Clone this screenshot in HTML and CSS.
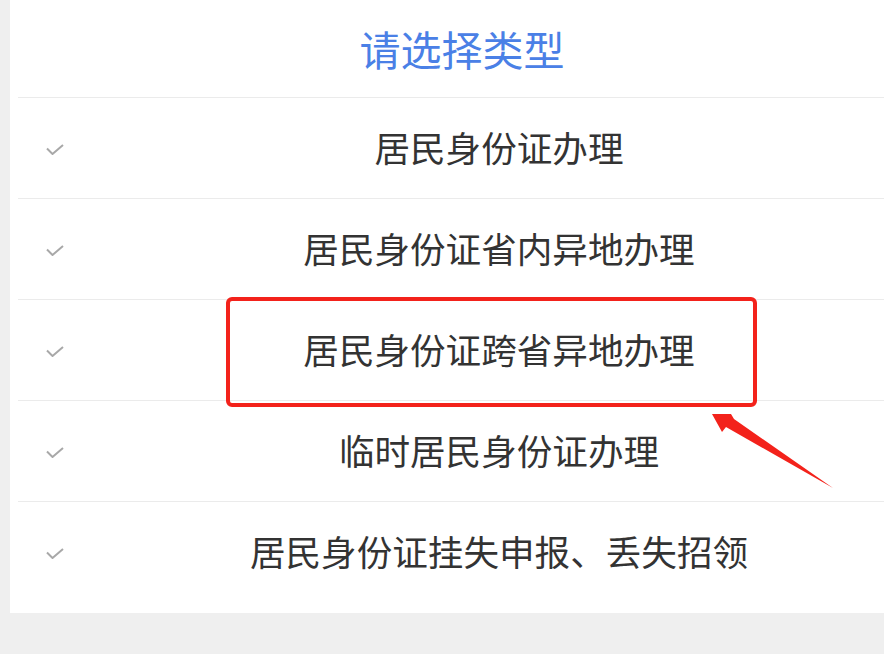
FILE: index.html
```html
<!DOCTYPE html>
<html lang="zh-CN">
<head>
  <meta charset="UTF-8">
  <meta name="viewport" content="width=device-width, initial-scale=1.0">
  <title>请选择类型</title>
  <link rel="stylesheet" href="styles.css">
</head>
<body>
  <div class="picker">
    <div class="picker-title">请选择类型</div>
    <div class="picker-list">
      <div class="picker-item">
        <span class="check"><svg width="18" height="11" viewBox="0 0 18 11"><polyline points="1,4.5 6.5,10 17,1" /></svg></span>
        <span class="item-text">居民身份证办理</span>
      </div>
      <div class="picker-item">
        <span class="check"><svg width="18" height="11" viewBox="0 0 18 11"><polyline points="1,4.5 6.5,10 17,1" /></svg></span>
        <span class="item-text">居民身份证省内异地办理</span>
      </div>
      <div class="picker-item">
        <span class="check"><svg width="18" height="11" viewBox="0 0 18 11"><polyline points="1,4.5 6.5,10 17,1" /></svg></span>
        <span class="item-text">居民身份证跨省异地办理</span>
      </div>
      <div class="picker-item">
        <span class="check"><svg width="18" height="11" viewBox="0 0 18 11"><polyline points="1,4.5 6.5,10 17,1" /></svg></span>
        <span class="item-text">临时居民身份证办理</span>
      </div>
      <div class="picker-item">
        <span class="check"><svg width="18" height="11" viewBox="0 0 18 11"><polyline points="1,4.5 6.5,10 17,1" /></svg></span>
        <span class="item-text">居民身份证挂失申报、丢失招领</span>
      </div>
    </div>
  </div>

  <!-- annotation drawn over the screenshot -->
  <div class="mark-box"></div>
  <svg class="mark-arrow" width="884" height="654" viewBox="0 0 884 654">
    <polygon points="712,414 731,414 734,419 833,488 726,427 722,432" />
  </svg>
</body>
</html>
```

FILE: styles.css
```css
* {
  margin: 0;
  padding: 0;
  box-sizing: border-box;
}

body {
  background-color: #efefef;
  font-family: "Noto Sans CJK SC", "Noto Sans", sans-serif;
  overflow: hidden;
  width: 884px;
  height: 654px;
  position: relative;
}

.picker {
  margin-left: 10px;
  width: 904px;
  background-color: #ffffff;
  padding-bottom: 10px;
}

.picker-title {
  height: 97px;
  display: flex;
  align-items: center;
  justify-content: center;
  font-size: 41px;
  color: #4a80e6;
  padding-bottom: 2px;
}

.picker-list {
  margin-left: 8px;
}

.picker-item {
  height: 101px;
  border-top: 1px solid #ebebeb;
  display: flex;
  align-items: center;
}

.picker-item:last-child {
  height: 102px;
}

.check {
  width: 66px;
  padding-left: 28px;
  display: flex;
  align-items: center;
  padding-top: 2px;
}

.check polyline {
  fill: none;
  stroke: #a8a8a8;
  stroke-width: 2;
}

.item-text {
  flex: 1;
  text-align: center;
  font-size: 35.6px;
  color: #333333;
  padding-bottom: 4px;
}

.mark-box {
  position: absolute;
  left: 226px;
  top: 297px;
  width: 531px;
  height: 110px;
  border: 4px solid #f3221b;
  border-radius: 6px;
}

.mark-arrow {
  position: absolute;
  left: 0;
  top: 0;
}

.mark-arrow polygon {
  fill: #f3221b;
}
```
